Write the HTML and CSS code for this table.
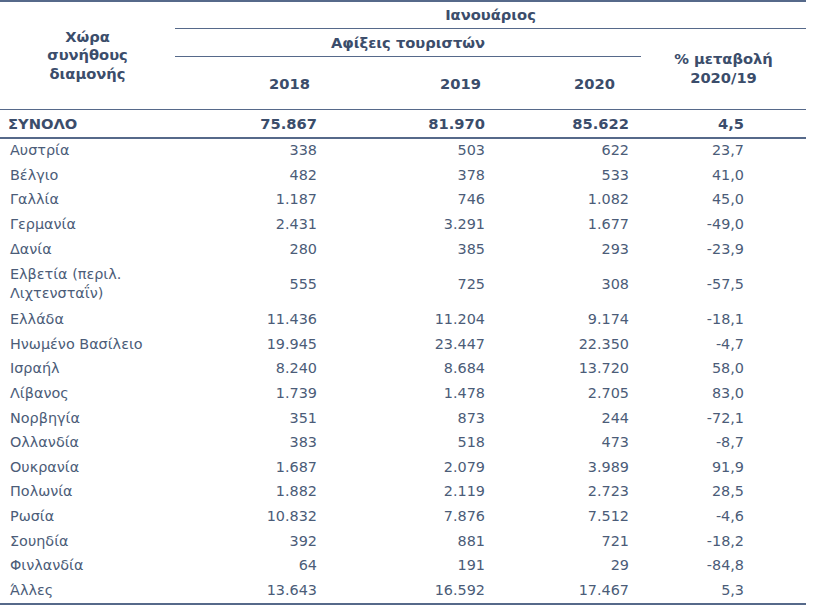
FILE: index.html
```html
<!DOCTYPE html>
<html lang="el">
<head>
<meta charset="utf-8">
<title>Αφίξεις τουριστών</title>
<link rel="stylesheet" href="styles.css">
</head>
<body>
<table class="stats">
  <colgroup>
    <col class="c-country">
    <col class="c-y18">
    <col class="c-y19">
    <col class="c-y20">
    <col class="c-chg">
  </colgroup>
  <thead>
    <tr class="h-month">
      <th class="h-country" rowspan="3">Χώρα<br>συνήθους<br>διαμονής</th>
      <th class="h-line" colspan="4">Ιανουάριος</th>
    </tr>
    <tr class="h-arr">
      <th class="h-line" colspan="3">Αφίξεις τουριστών</th>
      <th class="h-chg" rowspan="2">% μεταβολή<br>2020/19</th>
    </tr>
    <tr class="h-years">
      <th class="y18">2018</th>
      <th class="y19">2019</th>
      <th class="y20">2020</th>
    </tr>
  </thead>
  <tbody>
    <tr class="total">
      <td>ΣΥΝΟΛΟ</td><td>75.867</td><td>81.970</td><td>85.622</td><td>4,5</td>
    </tr>
    <tr><td>Αυστρία</td><td>338</td><td>503</td><td>622</td><td>23,7</td></tr>
    <tr><td>Βέλγιο</td><td>482</td><td>378</td><td>533</td><td>41,0</td></tr>
    <tr><td>Γαλλία</td><td>1.187</td><td>746</td><td>1.082</td><td>45,0</td></tr>
    <tr><td>Γερμανία</td><td>2.431</td><td>3.291</td><td>1.677</td><td>-49,0</td></tr>
    <tr><td>Δανία</td><td>280</td><td>385</td><td>293</td><td>-23,9</td></tr>
    <tr class="tall"><td>Ελβετία (περιλ.<br>Λιχτενσταΐν)</td><td>555</td><td>725</td><td>308</td><td>-57,5</td></tr>
    <tr><td>Ελλάδα</td><td>11.436</td><td>11.204</td><td>9.174</td><td>-18,1</td></tr>
    <tr><td>Ηνωμένο Βασίλειο</td><td>19.945</td><td>23.447</td><td>22.350</td><td>-4,7</td></tr>
    <tr><td>Ισραήλ</td><td>8.240</td><td>8.684</td><td>13.720</td><td>58,0</td></tr>
    <tr><td>Λίβανος</td><td>1.739</td><td>1.478</td><td>2.705</td><td>83,0</td></tr>
    <tr><td>Νορβηγία</td><td>351</td><td>873</td><td>244</td><td>-72,1</td></tr>
    <tr><td>Ολλανδία</td><td>383</td><td>518</td><td>473</td><td>-8,7</td></tr>
    <tr><td>Ουκρανία</td><td>1.687</td><td>2.079</td><td>3.989</td><td>91,9</td></tr>
    <tr><td>Πολωνία</td><td>1.882</td><td>2.119</td><td>2.723</td><td>28,5</td></tr>
    <tr><td>Ρωσία</td><td>10.832</td><td>7.876</td><td>7.512</td><td>-4,6</td></tr>
    <tr><td>Σουηδία</td><td>392</td><td>881</td><td>721</td><td>-18,2</td></tr>
    <tr><td>Φινλανδία</td><td>64</td><td>191</td><td>29</td><td>-84,8</td></tr>
    <tr class="last"><td>Άλλες</td><td>13.643</td><td>16.592</td><td>17.467</td><td>5,3</td></tr>
  </tbody>
</table>
</body>
</html>
```

FILE: styles.css
```css
html, body {
  margin: 0;
  padding: 0;
  background: #ffffff;
}

.stats {
  border-collapse: collapse;
  table-layout: fixed;
  width: 806px;
  font-family: "DejaVu Sans", Verdana, sans-serif;
  font-size: 14.4px;
  color: #4b5c78;
}

.c-country { width: 175px; }
.c-y18 { width: 154px; }
.c-y19 { width: 168px; }
.c-y20 { width: 144px; }
.c-chg { width: 165px; }

.stats th {
  font-weight: bold;
  font-size: 14.7px;
  color: #3b4d6b;
  padding: 0;
  line-height: 18.5px;
}

.h-month th,
.h-month .h-country {
  border-top: 2px solid #56698a;
}

.h-month { height: 27px; }
.h-month .h-line {
  text-align: center;
  border-bottom: 1px solid #56698a;
  vertical-align: middle;
  padding-top: 1px;
}

.h-arr { height: 28px; }
.h-arr .h-line {
  text-align: center;
  border-bottom: 1px solid #56698a;
  vertical-align: middle;
  padding-top: 2px;
}

.h-country {
  text-align: center;
  vertical-align: middle;
  padding-top: 6px;
}

.h-chg {
  text-align: center;
  vertical-align: middle;
  padding-top: 6px;
  padding-left: 0;
}

.h-years { height: 53px; }
.h-years th {
  text-align: right;
  vertical-align: middle;
  padding-top: 4px;
}
.h-years .y18 { padding-right: 19px; }
.h-years .y19 { padding-right: 16px; }
.h-years .y20 { padding-right: 26px; }

thead tr:last-child th,
thead .h-country,
thead .h-chg {
  border-bottom: 1px solid #56698a;
}

.stats td {
  line-height: 19px;
  padding: 2.8px 12px 2.8px 0;
  text-align: right;
  vertical-align: middle;
  white-space: nowrap;
}
.stats td:first-child {
  text-align: left;
  padding-left: 10px;
  padding-right: 0;
}
.stats td:last-child {
  padding-right: 62px;
}

.total td {
  font-weight: bold;
  font-size: 14.7px;
  color: #3b4d6b;
  padding-top: 4px;
  padding-bottom: 4px;
  border-bottom: 2px solid #56698a;
}
.total td:first-child {
  padding-left: 8px;
}

.tall td {
  padding-top: 4px;
  padding-bottom: 4px;
}

.last td {
  border-bottom: 2px solid #56698a;
}
```
